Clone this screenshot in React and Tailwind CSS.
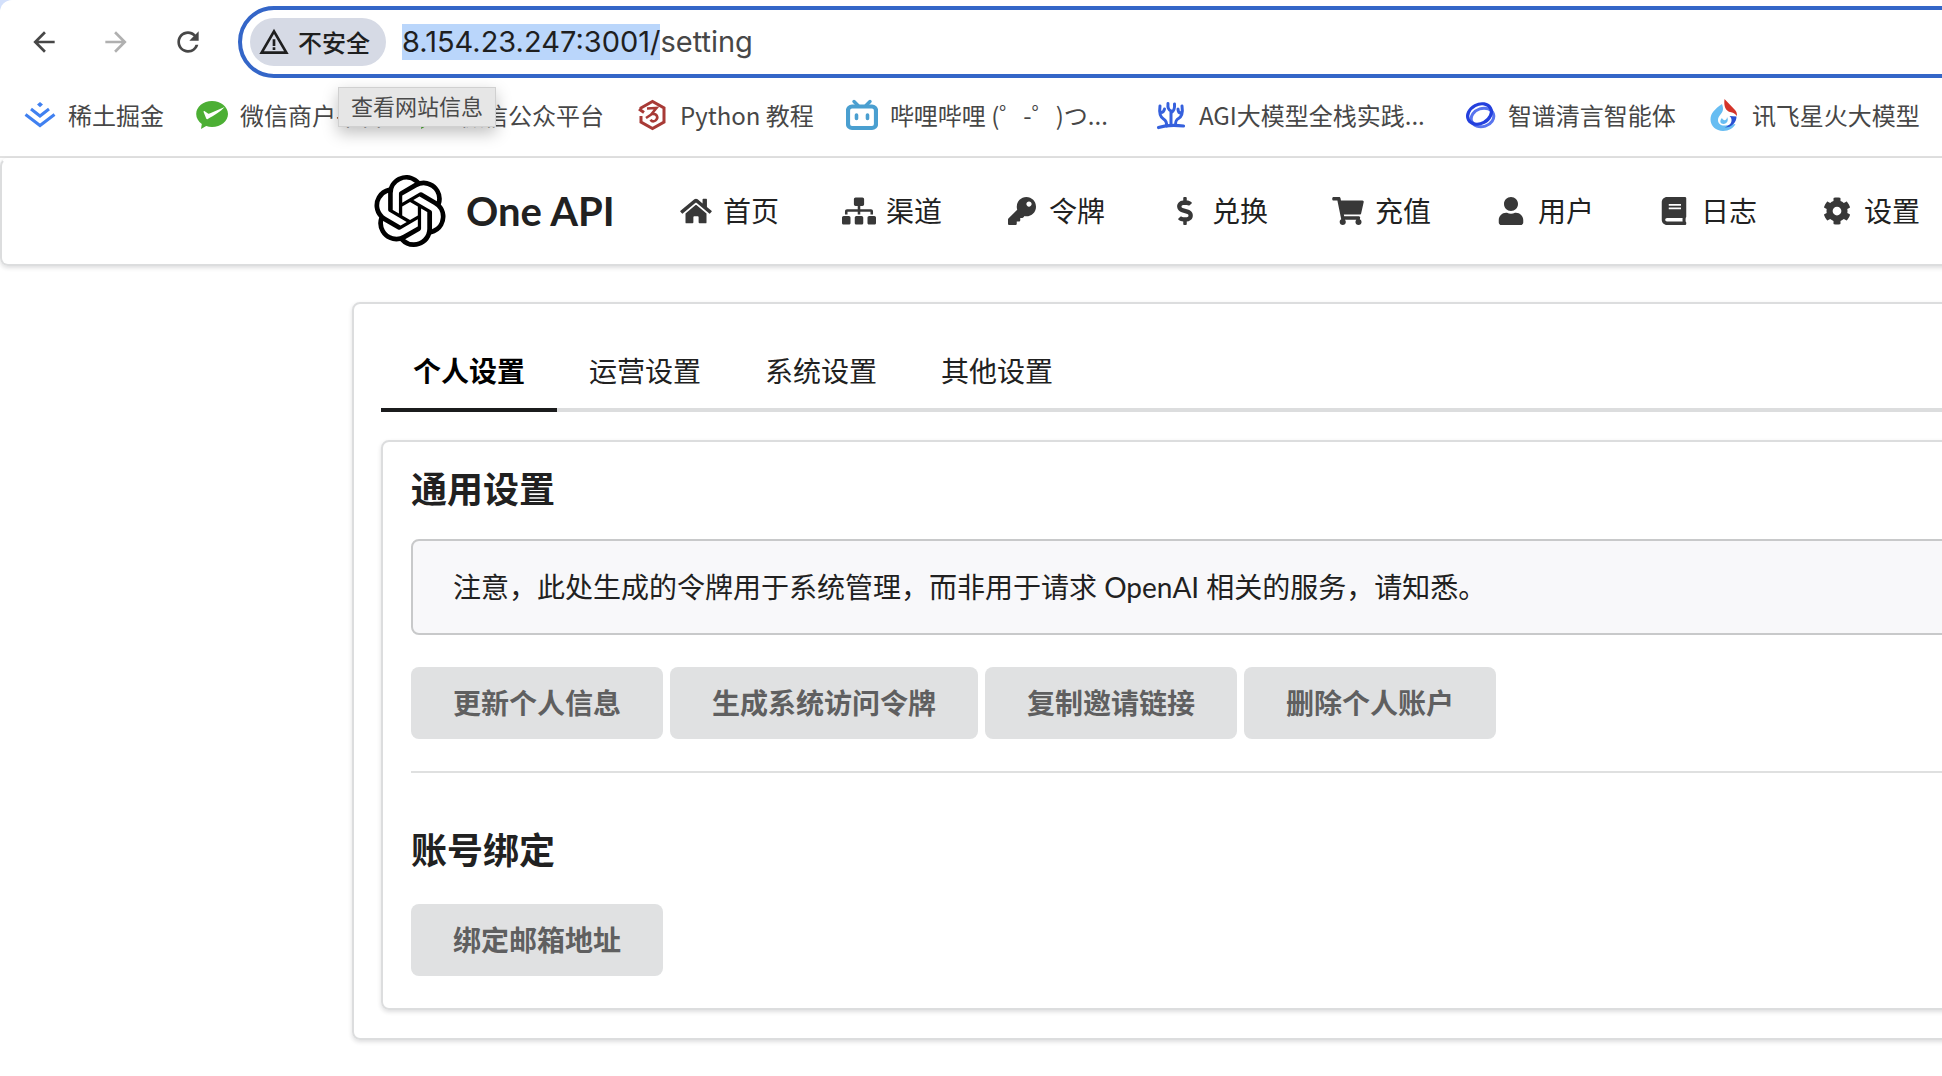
import { useEffect, useRef } from "react";
import { FaHome, FaSitemap, FaKey, FaDollarSign, FaShoppingCart, FaUser, FaBook, FaCog } from "react-icons/fa";
import { MdArrowBack, MdArrowForward, MdRefresh, MdWarningAmber } from "react-icons/md";
import { SiOpenai } from "react-icons/si";

function JuejinIcon() {
  return (
    <svg viewBox="0 0 32 32" className="size-8" fill="none" stroke="#4080f0" strokeWidth="3">
      <path d="M16 3l3 2.6-3 2.6-3-2.6z" fill="#4080f0" stroke="none" />
      <path d="M7 10l9 7 9-7" />
      <path d="M1.5 15.5L16 26.500l14.500-11" />
    </svg>
  );
}

function WechatPayIcon() {
  return (
    <svg viewBox="0 0 32 32" className="size-8">
      <path d="M16 2C7.200 2 .2 7.700.2 15c0 4 2.200 7.600 5.600 10l-.8 5 5.200-3c1.800.6 3.800.9 5.800.9 8.800 0 16-5.700 16-12.900S24.800 2 16 2z" fill="#4caf34" />
      <path d="M11.800 20c-.7.4-1.300.1-1.600-.5L7.600 13c-.2-.7.5-1.200 1.100-.8l3.300 2.200c.5.3 1 .3 1.600.1L28.600 8c-3.600 4.400-10.500 8.200-16.800 12z" fill="#fff" />
    </svg>
  );
}

function PythonCourseIcon() {
  return (
    <svg viewBox="0 0 32 32" className="size-8" fill="none" stroke="#a83a36" strokeWidth="3">
      <path d="M4 9.500L16.500 2.500 28 9v14l-11.500 6.500L5 23v-6" />
      <path d="M3 10l5 3.500" />
      <path d="M11 9.500l9.500-.5-5 6c5.500-1 7.500 4 4 6.500-2 1.300-4 .6-5-.8M16 15l-6 4" strokeWidth="2.600" />
    </svg>
  );
}

function BilibiliIcon() {
  return (
    <svg viewBox="0 0 32 32" className="size-8" fill="none" stroke="#4a9fd0" strokeLinecap="round">
      <path d="M8 2.500l4 4M24 2.500l-4 4" strokeWidth="3.400" />
      <rect x="2" y="7.500" width="28" height="21.500" rx="4" strokeWidth="4.200" />
      <path d="M10.500 16v3.500M21.500 16v3.500" strokeWidth="3.600" />
    </svg>
  );
}

function CoralIcon() {
  return (
    <svg viewBox="0 0 32 32" className="size-8" fill="none" stroke="#3560dd" strokeWidth="3" strokeLinecap="round">
      <path d="M3.500 28.500c8-2.500 16-2.500 25-1.500" strokeWidth="3.200" />
      <path d="M11.500 27c.5-4-.5-5.500-3-7C5 18 4 14 5 7M6 13.500c2 0 3-1 3.500-3.500" />
      <path d="M16 26V12M16 12c-2.500-1-3.500-3-3-7.500M16 14c2.500-1.500 4-4 3.500-9" />
      <path d="M20.500 26c0-4 .5-5 3-6.500 3.500-2 4.500-6 3.500-12.500M26 14c-2 0-3-1.500-3-4" />
    </svg>
  );
}

function ZhipuIcon() {
  return (
    <svg viewBox="0 0 32 32" className="size-8" fill="none">
      <ellipse cx="18.500" cy="18.500" rx="11.500" ry="9" stroke="#5874ee" strokeWidth="3" transform="rotate(-18 18.500 18.500)" />
      <ellipse cx="15.500" cy="15" rx="12.500" ry="9.500" stroke="#2440dd" strokeWidth="3.200" transform="rotate(-28 15.500 15)" />
    </svg>
  );
}

function SparkIcon() {
  return (
    <svg viewBox="0 0 32 32" className="size-8">
      <path d="M14 5C7 10 2.500 14 2.500 20.500c0 6.500 5.500 11.500 12.500 11.500 6 0 10.500-3 12.500-7l-10 1.500c-4.500.5-7.500-2-7.500-5.500 0-4.500 5-6.500 5-11 0-2-.5-3.500-1-5z" fill="#67bdf2" />
      <path d="M28.500 17.500c0 6-4.500 11-12 11 4-1.500 7.500-4 7-8-.2-1.500-.9-2.500-2-3.500z" fill="#2a50d2" />
      <path d="M16.500 0l10.500 11c1.500 1.600 2 3.400 2 6-2-2.500-4-3.200-7-4-4-1.200-6.500-5-5.500-13z" fill="#d4342a" />
      <path d="M14 19c1 3 5 3 5-1 2 3 0 7-3.500 7-3 0-4.500-3-1.500-6z" fill="#67bdf2" />
    </svg>
  );
}

const bookmarks = [
  { label: "稀土掘金", Icon: JuejinIcon },
  { label: "微信商户平台", Icon: WechatPayIcon },
  { label: "微信公众平台", Icon: WechatPayIcon },
  { label: "Python 教程", Icon: PythonCourseIcon },
  { label: "哔哩哔哩 (゜-゜)つ...", Icon: BilibiliIcon, wide: true },
  { label: "AGI大模型全栈实践...", Icon: CoralIcon, wide: true },
  { label: "智谱清言智能体", Icon: ZhipuIcon },
  { label: "讯飞星火大模型", Icon: SparkIcon },
];

const nav = [
  { label: "首页", Icon: FaHome },
  { label: "渠道", Icon: FaSitemap },
  { label: "令牌", Icon: FaKey },
  { label: "兑换", Icon: FaDollarSign },
  { label: "充值", Icon: FaShoppingCart },
  { label: "用户", Icon: FaUser },
  { label: "日志", Icon: FaBook },
  { label: "设置", Icon: FaCog },
];

const tabs = ["个人设置", "运营设置", "系统设置", "其他设置"];
const actions = ["更新个人信息", "生成系统访问令牌", "复制邀请链接", "删除个人账户"];

function AddressBar() {
  const input = useRef(null);
  useEffect(() => {
    input.current.focus({ preventScroll: true });
    input.current.setSelectionRange(0, 18);
  }, []);
  return (
    <div className="relative -mr-12 flex h-[72px] flex-1 items-center rounded-l-full border-4 border-[#3466c8] bg-white pl-2">
      <button className="flex h-12 shrink-0 items-center gap-2 rounded-full bg-[#d6dae5] px-2 pr-4 text-2xl font-medium text-[#1f1f1f]">
        <MdWarningAmber className="size-8" />
        不安全
      </button>
      <input
        ref={input}
        aria-label="地址"
        defaultValue="8.154.23.247:3001/setting"
        className="mr-16 ml-4 h-9 min-w-0 flex-1 bg-transparent font-['Inter','Noto_Sans_CJK_SC',sans-serif] text-[29px] leading-9 text-[#474747] outline-none selection:bg-[#bad6fb] selection:text-[#1f1f1f]"
      />
      <div role="tooltip" className="absolute top-[77px] left-24 z-10 flex h-10 items-center border border-[#d0d0d0] bg-[#e6e6e6] px-3 pb-1 text-[22px] whitespace-nowrap text-[#4a4a4a] shadow-[0_6px_16px_rgba(0,0,0,0.25)]">
        查看网站信息
      </div>
    </div>
  );
}

function GrayButton({ children }) {
  return (
    <button className="h-[72px] rounded-lg bg-[#e0e1e2] px-[42px] text-[28px] font-bold text-[#5f5f60]">
      {children}
    </button>
  );
}

export default function App() {
  return (
    <div className="min-h-screen overflow-clip bg-white font-['Lato','Noto_Sans_CJK_SC',sans-serif] text-[28px] text-[#212121]">
      <div className="bg-[#d3e0fb]">
        <div className="rounded-tl-xl border-b-2 border-[#e1e1e1] bg-white font-['Noto_Sans_CJK_SC',sans-serif]">
          <div className="flex pt-[6px]">
            <div className="flex w-[238px] shrink-0 items-center gap-10 pl-7 text-[#474747]">
              <button aria-label="后退"><MdArrowBack className="size-8" /></button>
              <button aria-label="前进" className="text-[#b0b0b0]"><MdArrowForward className="size-8" /></button>
              <button aria-label="刷新"><MdRefresh className="size-8" /></button>
            </div>
            <AddressBar />
          </div>
          <nav aria-label="书签" className="flex h-[78px] items-center gap-8 pb-1 pl-6 text-2xl whitespace-nowrap text-[#474747]">
            {bookmarks.map(({ label, Icon, wide }) => (
              <a key={label} href="#" className="flex shrink-0 items-center gap-3">
                <Icon />
                <span className={wide ? "w-[233px]" : ""}>{label}</span>
              </a>
            ))}
          </nav>
        </div>
      </div>

      <header className="-mr-4 flex h-[108px] items-center rounded-lg border-2 border-[#dcddde] border-t-transparent pb-0.5 pl-[372px] shadow-[0_2px_4px_rgba(34,36,38,0.15)]">
        <SiOpenai className="size-[72px] shrink-0 text-black" />
        <span className="ml-5 w-[181px] shrink-0 text-[40px] font-bold whitespace-nowrap">One API</span>
        <nav className="flex">
          {nav.map(({ label, Icon }) => (
            <a key={label} href="#" className="flex w-[163px] shrink-0 items-center gap-[10px] pl-8">
              <span className="flex w-[34px] shrink-0 justify-center text-[#383838]"><Icon className="h-7 w-[34px] shrink-0" /></span>
              {label}
            </a>
          ))}
        </nav>
      </header>

      <main className="mt-9 -mr-20 ml-[352px] rounded-lg border-2 border-[#dcddde] px-[27px] pt-[26px] pb-7 shadow-[0_2px_4px_rgba(34,36,38,0.15)]">
        <div role="tablist" className="flex border-b-4 border-[#dcddde]">
          {tabs.map((tab, i) => (
            <button
              key={tab}
              role="tab"
              aria-selected={i === 0}
              className={
                i === 0
                  ? "-mb-1 h-[82px] border-b-4 border-[#1b1c1d] px-8 pt-1 font-bold text-black"
                  : "-mb-1 h-[82px] border-b-4 border-transparent px-8 pt-1"
              }
            >
              {tab}
            </button>
          ))}
        </div>

        <section className="mt-7 rounded-lg border-2 border-[#dcddde] px-7 pt-[26px] pb-8 shadow-[0_2px_4px_rgba(34,36,38,0.15)]">
          <h3 className="text-4xl leading-[42px] font-bold">通用设置</h3>
          <div className="mt-[29px] flex h-24 items-center rounded-lg border-2 border-[#c8c9ca] bg-[#f8f8fa] px-10">
            注意，此处生成的令牌用于系统管理，而非用于请求 OpenAI 相关的服务，请知悉。
          </div>
          <div className="mt-8 flex gap-[7px]">
            {actions.map((a) => <GrayButton key={a}>{a}</GrayButton>)}
          </div>
          <hr className="mt-8 border-t-2 border-[#dfe0e0]" />
          <h3 className="mt-14 mb-[33px] text-4xl leading-[42px] font-bold">账号绑定</h3>
          <GrayButton>绑定邮箱地址</GrayButton>
        </section>
      </main>
    </div>
  );
}
